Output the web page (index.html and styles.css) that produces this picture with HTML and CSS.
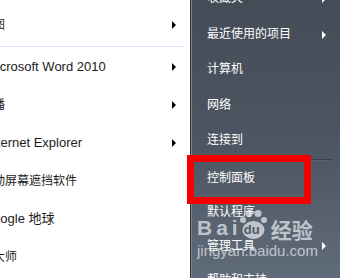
FILE: index.html
```html
<!doctype html>
<html lang="zh-CN">
<head>
  <meta charset="UTF-8">
  <meta name="viewport" content="width=device-width, initial-scale=1.0">
  <title>开始菜单</title>
  <link rel="stylesheet" href="styles.css">
</head>
<body>
  <div class="menu">
    <div class="programs">
      <div class="prog cn has-sub">画图</div>
      <div class="divider"></div>
      <div class="prog latin has-sub">Microsoft Word 2010</div>
      <div class="prog cn has-sub">直播</div>
      <div class="prog latin has-sub">Internet Explorer</div>
      <div class="prog cn">自动屏幕遮挡软件</div>
      <div class="prog google">Google 地球</div>
      <div class="prog cn">鲁大师</div>
    </div>

    <div class="places">
      <div class="place has-sub">收藏夹</div>
      <div class="place has-sub">最近使用的项目</div>
      <div class="place">计算机</div>
      <div class="place">网络</div>
      <div class="place">连接到</div>
      <div class="place-divider"></div>
      <div class="place short">控制面板</div>
      <div class="place short">默认程序</div>
      <div class="place short has-sub">管理工具</div>
      <div class="place short">帮助和支持</div>
    </div>
  </div>

  <div class="highlight"></div>

  <div class="watermark">
    <div class="wm-logo">
      <span class="wm-bai">Bai</span>
      <span class="wm-paw">
        <svg width="30" height="30" viewBox="0 0 30 30">
          <circle cx="5" cy="10" r="3"/>
          <circle cx="11" cy="3.5" r="3.5"/>
          <circle cx="20" cy="3.5" r="3.5"/>
          <circle cx="26" cy="10" r="3"/>
          <ellipse cx="15.5" cy="20" rx="11" ry="9"/>
        </svg>
        <span class="wm-du">du</span>
      </span>
      <span class="wm-jy">经验</span>
    </div>
    <div class="wm-url">jingyan.baidu.com</div>
  </div>
</body>
</html>
```

FILE: styles.css
```css
* {
  box-sizing: border-box;
}

html, body {
  margin: 0;
  width: 340px;
  height: 278px;
  overflow: hidden;
}

body {
  font-family: "Liberation Sans", "Noto Sans CJK SC", sans-serif;
  font-size: 12px;
  position: relative;
}

.menu {
  display: flex;
  height: 100%;
}

/* left column: programs */
.programs {
  width: 190px;
  background-color: #fff;
  padding-top: 6px;
  overflow: hidden;
}

.prog {
  position: relative;
  height: 38px;
  line-height: 38px;
  margin-left: -19px;
  color: #1b1b1b;
  white-space: nowrap;
}

.prog.latin {
  font-size: 13px;
  margin-left: -14px;
}

.prog.google {
  font-size: 13px;
  margin-left: -17px;
}

.has-sub::after {
  content: "";
  position: absolute;
  top: 50%;
  margin-top: -4px;
  border-top: 4px solid transparent;
  border-bottom: 4px solid transparent;
}

.prog.has-sub::after {
  right: 14px;
  border-left: 4px solid #000;
}

.divider {
  height: 1px;
  width: 183px;
  margin: 2px 0 1px;
  background-color: #d3e2f4;
}

/* right column: places */
.places {
  flex: 1;
  border-left: 1px solid #2f353d;
  box-shadow: inset 1px 0 #7d848e;
  background: linear-gradient(to bottom, #444c57 0%, #4c5561 50%, #606b7a 100%);
  padding-left: 16px;
  padding-right: 14px;
  overflow: hidden;
}

.place {
  position: relative;
  height: 35.5px;
  line-height: 35.5px;
  color: #fff;
  white-space: nowrap;
}

.place:first-child {
  margin-top: -18.75px;
}

.place.short {
  height: 34px;
  line-height: 34px;
}

.place.has-sub::after {
  right: 0;
  border-left: 4px solid #fff;
}

.place-divider {
  height: 1px;
  margin: 0 -6px 1px -10px;
  background-color: #3b424c;
  box-shadow: 0 1px #5a626e;
}

/* annotation */
.highlight {
  position: absolute;
  left: 187px;
  top: 155px;
  width: 124px;
  height: 49px;
  border: 7px solid #f40000;
}

.watermark {
  position: absolute;
  left: 197px;
  top: 209px;
  color: rgba(236, 239, 243, 0.7);
}

.wm-logo {
  display: flex;
  align-items: flex-end;
  height: 31px;
}

.wm-bai {
  font-family: "Liberation Sans", Arial, sans-serif;
  font-weight: bold;
  font-size: 21px;
  letter-spacing: 4px;
  line-height: 21px;
  margin-bottom: 2px;
}

.wm-paw {
  position: relative;
  width: 30px;
  height: 30px;
  margin-left: -4px;
}

.wm-paw svg {
  display: block;
  fill: rgba(236, 239, 243, 0.7);
}

.wm-du {
  position: absolute;
  left: 6px;
  top: 13px;
  font-family: "Liberation Sans", Arial, sans-serif;
  font-weight: bold;
  font-size: 13px;
  line-height: 13px;
  color: #505967;
}

.wm-jy {
  font-family: "Noto Sans CJK SC", sans-serif;
  font-weight: bold;
  font-size: 21px;
  line-height: 22px;
  margin-left: 3px;
}

.wm-url {
  font-family: "Liberation Sans", Arial, sans-serif;
  font-size: 15px;
  line-height: 16px;
  margin-top: 3px;
}
```
